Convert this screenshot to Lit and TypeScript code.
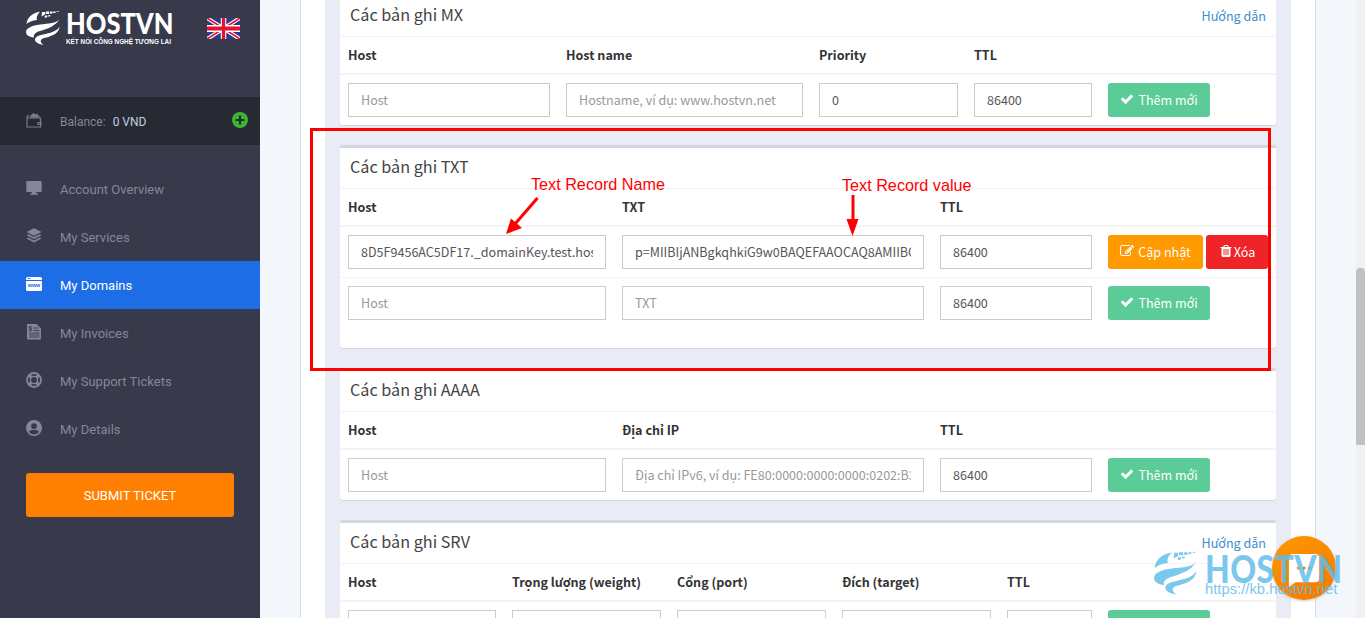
import { LitElement, html, css, svg } from "lit";
import { customElement } from "lit/decorators.js";

const swirl = svg`
  <path d="M.5 13C1 7 6 2 14 .8C11 4 10 7 11 9C6 9.500 3 11 .5 13Z"/>
  <path d="M33.500 8C31 12.500 22 12.500 14 13.500C6 14.500 0 17 0 21C0 24 3 26 8 26.500C7 24 9 21.500 14 20C21 18 30 15 33.500 8Z"/>
  <path d="M33.500 15.500C31 20.500 24 22 17 23.500C13 24.300 10 25.500 9 28C8.500 30.500 11.500 33 17.500 34C13 30.500 14.500 27.800 19 26.800C26 25.200 33 22.500 33.500 15.500Z"/>
  <path d="M16 1h3v2.500l-3.500 2zM20 .5h3v2.500h-3.500zM24 .500h2.500v2h-3zM27.500 .500h2v1.500h-2.500zM30.500 .500l2.500-.500-.500 1h-2zM19 4.500h2.500l-.500 2h-2.500zM22.500 4h2l-.500 1.500h-2z"/>`;

const check = svg`<svg class="fa" viewBox="0 0 1792 1792"><path fill="currentColor" d="M1671 566q0 40-28 68l-724 724-136 136q-28 28-68 28t-68-28l-136-136-362-362q-28-28-28-68t28-68l136-136q28-28 68-28t68 28l294 295 656-657q28-28 68-28t68 28l136 136q28 28 28 68z"/></svg>`;
const edit = svg`<svg class="fa" viewBox="0 0 1792 1792"><path fill="currentColor" d="M888 1184l116-116-152-152-116 116v56h96v96h56zm440-720q-16-16-33 1L945 815q-17 17-1 33t33-1l350-350q17-17 1-33zm80 594v190q0 119-84.500 203.500T1120 1536H288q-119 0-203.500-84.500T0 1248V416q0-119 84.500-203.500T288 128h832q63 0 117 25 15 7 18 23 3 17-9 29l-49 49q-14 14-32 8-23-6-45-6H288q-66 0-113 47t-47 113v832q0 66 47 113t113 47h832q66 0 113-47t47-113V1058q0-13 9-22l64-64q15-15 35-7t20 29zm-96-738l288 288-672 672H640V992zm444 132l-92 92-288-288 92-92q28-28 68-28t68 28l152 152q28 28 28 68t-28 68z"/></svg>`;
const trash = svg`<svg class="fa" viewBox="0 0 1792 1792"><path fill="currentColor" d="M704 1376V672q0-14-9-23t-23-9h-64q-14 0-23 9t-9 23v704q0 14 9 23t23 9h64q14 0 23-9t9-23zm256 0V672q0-14-9-23t-23-9h-64q-14 0-23 9t-9 23v704q0 14 9 23t23 9h64q14 0 23-9t9-23zm256 0V672q0-14-9-23t-23-9h-64q-14 0-23 9t-9 23v704q0 14 9 23t23 9h64q14 0 23-9t9-23zM672 384h448l-48-117q-7-9-17-11H738q-10 2-17 11zm928 32v64q0 14-9 23t-23 9h-96v948q0 83-47 143.500t-113 60.500H480q-66 0-113-58.500T320 1464V512h-96q-14 0-23-9t-9-23v-64q0-14 9-23t23-9h309l70-167q15-37 54-63t79-26h320q40 0 79 26t54 63l70 167h309q14 0 23 9t9 23z"/></svg>`;

const navIcons: Record<string, unknown> = {
  monitor: svg`<svg class="ni" viewBox="0 0 16 16"><path fill="currentColor" d="M1.500 1h13a1.200 1.200 0 0 1 1.200 1.200v8.600a1.200 1.200 0 0 1-1.200 1.200h-4.300l.4 1.500h1.400v1.200H4.200v-1.200h1.400l.4-1.500H1.500a1.200 1.200 0 0 1-1.200-1.200V2.200A1.200 1.200 0 0 1 1.500 1z"/></svg>`,
  layers: svg`<svg class="ni" viewBox="0 0 16 16"><path fill="currentColor" d="M8 .3l7.500 3.700L8 7.700.5 4z"/><path fill="currentColor" d="M2.400 6.200L8 9l5.600-2.800 1.900 1L8 10.900.5 7.200z"/><path fill="currentColor" d="M2.400 9.600L8 12.400l5.600-2.800 1.900 1L8 14.500.5 10.600z"/></svg>`,
  www: svg`<svg class="ni" viewBox="0 0 16 16"><rect y="1" width="16" height="14" rx="1.500" fill="currentColor"/><rect y="4" width="16" height="1" fill="#1d6de6"/><rect x="1.500" y="2.200" width="3" height=".8" fill="#1d6de6"/><text x="8" y="11" text-anchor="middle" font-family="Liberation Sans, sans-serif" font-size="5.400" font-weight="700" fill="#1d6de6">www</text></svg>`,
  invoice: svg`<svg class="ni" viewBox="0 0 16 16"><path fill="currentColor" d="M1 0h9.500L15 4.500V14.500a1 1 0 0 1-1 1H2a1 1 0 0 1-1-1z"/><text x="4.300" y="6.600" text-anchor="middle" font-family="Liberation Sans, sans-serif" font-size="6.500" font-weight="700" fill="#383a4b">$</text><path stroke="#383a4b" stroke-width=".9" d="M7.500 4h5M7.500 6.500h6M3 9h10.500M3 11h10.500M3 13h10.500"/></svg>`,
  ring: svg`<svg class="ni" viewBox="0 0 16 16"><circle cx="8" cy="8" r="7" fill="none" stroke="currentColor" stroke-width="1.800"/><circle cx="8" cy="8" r="3.600" fill="none" stroke="currentColor" stroke-width="1.400"/><path stroke="currentColor" stroke-width="3" d="M2.700 2.700l2.700 2.700M13.300 2.700l-2.700 2.700M2.700 13.300l2.700-2.700M13.300 13.300l-2.700-2.700"/></svg>`,
  user: svg`<svg class="ni" viewBox="0 0 16 16"><path fill="currentColor" d="M8 0a8 8 0 1 0 0 16A8 8 0 0 0 8 0zm0 3.200a2.900 2.900 0 1 1 0 5.800 2.900 2.900 0 0 1 0-5.800zm0 11.200a6.400 6.400 0 0 1-5-2.400c.5-1.500 2.700-2.300 5-2.300s4.500.8 5 2.300a6.400 6.400 0 0 1-5 2.400z"/></svg>`,
};

const nav = [
  { icon: "monitor", label: "Account Overview" },
  { icon: "layers", label: "My Services" },
  { icon: "www", label: "My Domains", active: true },
  { icon: "invoice", label: "My Invoices" },
  { icon: "ring", label: "My Support Tickets" },
  { icon: "user", label: "My Details" },
];

type Field = { ph?: string; val?: string };
type Row = { fields: Field[]; saved?: boolean };
type Card = { title: string; guide?: boolean; cols: number[]; heads: string[]; rows: Row[]; extra?: boolean };

const cards: Card[] = [
  {
    title: "Các bản ghi MX", guide: true, cols: [202, 237, 139, 118],
    heads: ["Host", "Host name", "Priority", "TTL"],
    rows: [{ fields: [{ ph: "Host" }, { ph: "Hostname, ví dụ: www.hostvn.net" }, { val: "0" }, { val: "86400" }] }],
  },
  {
    title: "Các bản ghi TXT", cols: [258, 302, 152], heads: ["Host", "TXT", "TTL"], extra: true,
    rows: [
      { saved: true, fields: [{ val: "8D5F9456AC5DF17._domainKey.test.hostvn.net" }, { val: "p=MIIBIjANBgkqhkiG9w0BAQEFAAOCAQ8AMIIBCgKCAQEA" }, { val: "86400" }] },
      { fields: [{ ph: "Host" }, { ph: "TXT" }, { val: "86400" }] },
    ],
  },
  {
    title: "Các bản ghi AAAA", cols: [258, 302, 152], heads: ["Host", "Địa chỉ IP", "TTL"],
    rows: [{ fields: [{ ph: "Host" }, { ph: "Địa chỉ IPv6, ví dụ: FE80:0000:0000:0000:0202:B3FF:FE1E:8329" }, { val: "86400" }] }],
  },
  {
    title: "Các bản ghi SRV", guide: true, cols: [148, 149, 149, 149, 85],
    heads: ["Host", "Trọng lượng (weight)", "Cổng (port)", "Đích (target)", "TTL"],
    rows: [{ fields: [{}, {}, {}, {}, {}] }],
  },
];

@customElement("app-root")
export class AppRoot extends LitElement {
  static styles = css`
    :host { display: flex; width: 1365px; height: 618px; overflow: hidden; position: relative; background: #f3f6fa;
      font-family: "Noto Sans CJK SC", "Source Sans Pro", "Noto Sans", sans-serif; font-size: 12.550px; }
    * { box-sizing: border-box; }
    .side { width: 260px; flex: none; background: #383a4b; display: flex; flex-direction: column; font-family: Roboto, sans-serif; font-size: 13px; color: #84869b; }
    .brand { height: 97px; display: flex; align-items: flex-start; padding: 11px 20px 0 26px; }
    .mark { width: 34px; height: 34px; fill: #fff; flex: none; overflow: visible; }
    .word { margin-left: 6px; color: #fff; font-family: Lato, sans-serif; display: flex; flex-direction: column; width: 107px; }
    .word b { font-size: 25.500px; line-height: 24px; margin-top: 1px; font-weight: 900; white-space: nowrap; transform: scaleY(1.120); transform-origin: left 20px; }
    .word span { font-family: "Liberation Sans", sans-serif; font-size: 7.500px; font-weight: 700; line-height: 9px; margin-top: 1px; white-space: nowrap; transform: scaleX(.85); transform-origin: left center; }
    .flag { width: 33px; height: 21px; margin: 7px 0 0 auto; flex: none; }
    .bal { height: 48px; background: #272a33; display: flex; align-items: center; padding: 0 12px 0 26px; font-size: 12px; }
    .bal .lab { margin-left: 18px; margin-top: 2px; }
    .bal .val { margin-left: 7px; margin-top: 2px; color: #c3cde0; }
    .plus { margin-left: auto; margin-top: -2px; width: 16px; height: 16px; }
    .wallet { width: 16px; height: 16px; margin-top: -3px; }
    nav { margin-top: 20px; display: flex; flex-direction: column; }
    .item { height: 48px; display: flex; align-items: center; padding-left: 26px; gap: 18px; }
    .item.on { background: #1d6de6; color: #fff; }
    .ni { width: 16px; height: 16px; flex: none; margin-top: -3px; }
    .submit { margin: 20px 26px 0; height: 44px; background: #ff7f00; color: #fff; border-radius: 3px; display: flex; align-items: center; justify-content: center; text-transform: uppercase; font-size: 13px; }

    .outer { flex: 1; min-width: 0; padding: 0 0 0 40px; display: flex; }
    .sheet { width: 1016px; flex: none; background: #fff; border-left: 1px solid #d6dae2; border-right: 1px solid #d6dae2; padding: 0 24px; display: flex; }
    .well { flex: 1; min-width: 0; background: #e9ecf5; padding: 0 15px; overflow: hidden; }
    .cards { display: flex; flex-direction: column; gap: 20px; margin-top: -7px; }
    .card { background: #fff; border-top: 3px solid #d2d6de; border-radius: 3px; box-shadow: 0 1px 1px rgba(0,0,0,.1); flex: none; }
    .head { height: 41px; border-bottom: 1px solid #f4f4f4; display: flex; align-items: center; justify-content: space-between; padding: 0 10px; }
    .head h3 { margin: 0; font-size: 16.200px; font-weight: 400; color: #444; line-height: 36px; margin-top: -4px; }
    .head a { color: #3c8dcc; font-size: 12.550px; margin-top: -2px; }
    .grid { display: grid; column-gap: 16px; padding: 0 8px; align-items: center; }
    .ths { height: 38px; padding-bottom: 2px; border-bottom: 2px solid #f4f4f4; font-weight: 700; color: #333; }
    .row { padding: 8px; border-top: 1px solid #f4f4f4; }
    .row.first { border-top: 0; }
    .rows.extra { padding-bottom: 20px; }
    input { width: 100%; height: 34px; border: 1px solid #ccc; padding: 0 12px 2px; font: inherit; font-size: 12.550px; color: #555; background: #fff; border-radius: 0; outline: none; display: block; }
    input::placeholder { color: #999; opacity: 1; }
    .btns { display: flex; gap: 3px; }
    .btn { height: 34px; padding-bottom: 2px; border-radius: 3px; color: #fff; display: flex; align-items: center; justify-content: center; gap: 4px; white-space: nowrap; font-size: 12.550px; }
    .fa { width: 14px; height: 14px; flex: none; }
    .add { width: 102px; background: #5bcb97; }
    .upd { width: 95px; background: #ff9a00; }
    .del { width: 62px; background: #ee2429; gap: 1px; }
    .scroll { width: 9px; flex: none; margin-left: auto; background: #f1f1f1; padding-top: 268px; }
    .thumb { height: 177px; background: #c1c1c1; border-radius: 4px 4px 0 0; }

    .box { position: absolute; left: 310px; top: 128px; width: 961px; height: 243px; border: 3px solid #f00; pointer-events: none; }
    .note { position: absolute; font-family: "Liberation Sans", sans-serif; font-size: 16.200px; line-height: 18px; color: #f00; white-space: nowrap; }
    .arrows { position: absolute; left: 0; top: 0; width: 1365px; height: 618px; pointer-events: none; }

    .chat { position: absolute; left: 1272px; top: 536px; width: 64px; height: 64px; border-radius: 50%; background: linear-gradient(150deg, #ff9800, #f57c00 90%); box-shadow: 0 1px 3px rgba(0,0,0,.2); display: flex; align-items: center; justify-content: center; }
    .chat svg { width: 32px; height: 36px; margin-top: 3px; }
    .water { position: absolute; left: 1154px; top: 550px; display: flex; gap: 8px; color: #5fbcec; opacity: .82; }
    .water .mark { width: 43px; height: 44px; fill: currentColor; margin-top: 1px; }
    .water div { display: flex; flex-direction: column; width: 140px; }
    .water b { font-family: Lato, sans-serif; font-size: 32px; line-height: 27px; font-weight: 900; letter-spacing: .4px; transform: scaleY(1.180); transform-origin: left top; margin-top: 2px; white-space: nowrap; }
    .water span { font-family: "Liberation Sans", sans-serif; font-size: 14.800px; line-height: 16px; margin-top: 2px; white-space: nowrap; }
  `;

  private renderCard(c: Card) {
    const cols = c.cols.map((n) => `${n}px`).join(" ") + " 1fr";
    return html`<section class="card">
      <div class="head"><h3>${c.title}</h3>${c.guide ? html`<a>Hướng dẫn</a>` : ""}</div>
      <div class="grid ths" style="grid-template-columns:${cols}">
        ${c.heads.map((h) => html`<div>${h}</div>`)}<div></div>
      </div>
      <div class="rows ${c.extra ? "extra" : ""}">
        ${c.rows.map((r, i) => html`<div class="grid row ${i === 0 ? "first" : ""}" style="grid-template-columns:${cols}">
          ${r.fields.map((f) => html`<input .value=${f.val ?? ""} placeholder=${f.ph ?? ""} />`)}
          <div class="btns">
            ${r.saved
              ? html`<div class="btn upd">${edit}<span>Cập nhật</span></div><div class="btn del">${trash}<span>Xóa</span></div>`
              : html`<div class="btn add">${check}<span>Thêm mới</span></div>`}
          </div>
        </div>`)}
      </div>
    </section>`;
  }

  render() {
    return html`
      <aside class="side">
        <div class="brand">
          <svg class="mark" viewBox="0 0 34 34">${swirl}</svg>
          <div class="word"><b>HOSTVN</b><span>KẾT NỐI CÔNG NGHỆ TƯƠNG LAI</span></div>
          <svg class="flag" viewBox="0 0 60 30" preserveAspectRatio="none">
            <rect width="60" height="30" fill="#2b3a8c"/>
            <path d="M0 0L60 30M60 0L0 30" stroke="#fff" stroke-width="6"/>
            <path d="M0 0L60 30M60 0L0 30" stroke="#e8112d" stroke-width="2.500"/>
            <path d="M30 0V30M0 15H60" stroke="#fff" stroke-width="10"/>
            <path d="M30 0V30M0 15H60" stroke="#e8112d" stroke-width="6"/>
          </svg>
        </div>
        <div class="bal">
          <svg class="wallet" viewBox="0 0 16 16"><path fill="none" stroke="#7a7c90" stroke-width="1.200" d="M1 6h13.500v9H1zM1 6V4.500L3 3M13 6V3.500M12 10.500h3v2h-3z"/><path fill="#7a7c90" d="M3.500 5.500l2-3 2-1.500 2 1.500 2-1 1 4z"/></svg>
          <span class="lab">Balance:</span><span class="val">0 VND</span>
          <svg class="plus" viewBox="0 0 16 16"><circle cx="8" cy="8" r="8" fill="#3cb632"/><path d="M8 3.500v9M3.500 8h9" stroke="#272a33" stroke-width="2.200"/></svg>
        </div>
        <nav>
          ${nav.map((n) => html`<div class="item ${n.active ? "on" : ""}">${navIcons[n.icon]}<span>${n.label}</span></div>`)}
        </nav>
        <div class="submit">Submit Ticket</div>
      </aside>
      <main class="outer">
        <div class="sheet"><div class="well"><div class="cards">${cards.map((c) => this.renderCard(c))}</div></div></div>
        <div class="scroll"><div class="thumb"></div></div>
      </main>

      <div class="box"></div>
      <div class="note" style="left:531px;top:175px">Text Record Name</div>
      <div class="note" style="left:842px;top:176px">Text Record value</div>
      <svg class="arrows" viewBox="0 0 1365 618">
        <path d="M537.500 198L515 224" stroke="#f00" stroke-width="3" fill="none"/>
        <path d="M506 234L511 218.500L522 228Z" fill="#f00"/>
        <path d="M853 195V220" stroke="#f00" stroke-width="3" fill="none"/>
        <path d="M852.500 236L846.500 219H858.500Z" fill="#f00"/>
      </svg>

      <div class="chat">
        <svg viewBox="0 0 34 36"><path fill="#fff" d="M5 1h24a4 4 0 0 1 4 4v22a4 4 0 0 1-4 4H8l-7 5V5a4 4 0 0 1 4-4z"/><circle cx="11" cy="16" r="1.800" fill="#f58a00"/><circle cx="17" cy="16" r="1.800" fill="#f58a00"/><circle cx="23" cy="16" r="1.800" fill="#f58a00"/></svg>
      </div>
      <div class="water">
        <svg class="mark" viewBox="0 0 34 34">${swirl}</svg>
        <div><b>HOSTVN</b><span>https://kb.hostvn.net</span></div>
      </div>
    `;
  }
}
